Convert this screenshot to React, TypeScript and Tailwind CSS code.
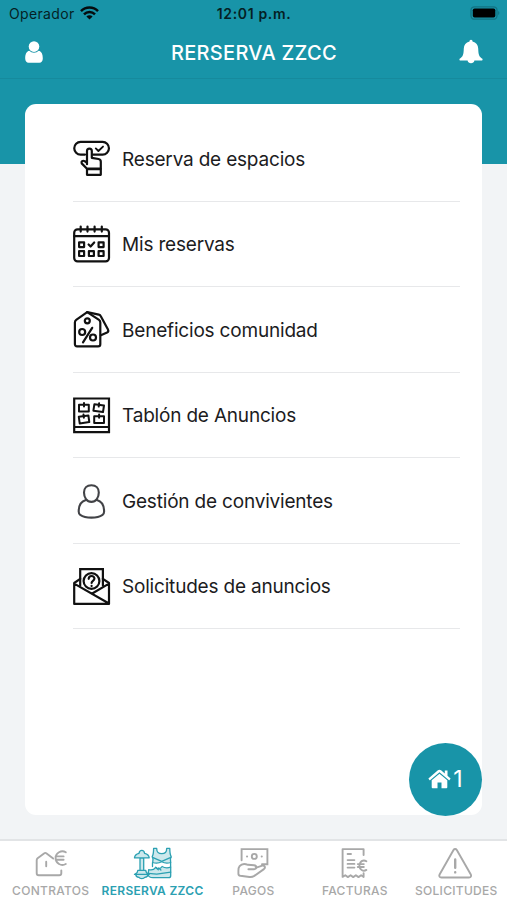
import type { ReactNode } from "react"
import clsx from "clsx"

const Icon = ({ children }: { children: ReactNode }) => (
  <svg viewBox="0 0 38 38" className="w-[38px] h-[38px] shrink-0" fill="none" stroke="#111" strokeWidth="2.2" strokeLinejoin="round" strokeLinecap="round">
    {children}
  </svg>
)

const TabIcon = ({ children }: { children: ReactNode }) => (
  <svg viewBox="0 0 40 34" className="w-10 h-[34px]" fill="none" stroke="currentColor" strokeWidth="1.9" strokeLinejoin="round" strokeLinecap="round">
    {children}
  </svg>
)

const menu = [
  {
    label: "Reserva de espacios",
    icon: (
      <Icon>
        <path d="M12 15.6H7.6a6.3 6.3 0 0 1 0-12.7h22a6.3 6.3 0 0 1 0 12.7H20" />
        <path d="m22.8 9.4 2.6 2.6 4.6-4.4" strokeWidth="1.9" />
        <path d="M14 25.2V12a2.4 2.4 0 0 1 4.8 0v6.8l6.7 1.2c1.6.3 2.3 1.2 2.3 2.7v7H14l-5.3-5.3c-.8-1.8 1.1-3.4 3-2.2L14 24" />
        <path d="M14 30.2h13.8v5.6H14z" />
      </Icon>
    ),
  },
  {
    label: "Mis reservas",
    icon: (
      <Icon>
        <rect x="1.2" y="4.4" width="34.8" height="32" rx="3.4" />
        <path d="M1.2 11.2H36M7.7 1.6v5M14.5 1.6v5M21.6 1.6v5M28.8 1.6v5" />
        <path d="M6.1 17.3h5v4.8h-5zM25.6 17.3h5v4.8h-5zM6.1 26.2h5V31h-5zM15.9 26.2h5V31h-5zM25.6 26.2h5V31h-5z" />
        <path d="m15.6 19.5 2 2 3.6-4" />
      </Icon>
    ),
  },
  {
    label: "Beneficios comunidad",
    icon: (
      <Icon>
        <path d="M14.2 2.1 26 9.9c1 .7 1.3 1.3 1.3 2.5v21.8a2.2 2.2 0 0 1-2.2 2.2h-21A2.2 2.2 0 0 1 1.9 34V12.4c0-1.2.3-1.8 1.3-2.5Z" />
        <path d="m14.2 2.1 11.6 2.5c1 .2 1.6.7 2 1.6l7.2 13.4c.6 1.3.3 2.2-.9 2.8l-6.3 2.8" />
        <circle cx="14.3" cy="10.8" r="2.5" />
        <circle cx="9.2" cy="22" r="3" />
        <circle cx="20" cy="27.5" r="3" />
        <path d="M19.2 17.8 10 32.4" />
      </Icon>
    ),
  },
  {
    label: "Tablón de Anuncios",
    icon: (
      <Icon>
        <path d="M1.2 2.5H36v33.6H1.2zM1.2 31H36" strokeLinejoin="miter" />
        <g strokeWidth="2">
          <path d="M6 8.7h9.8v6.7H6zM21.4 8.2l9.6 1.3-1 6.6-9.6-1.4zM5.8 20.8l9.6-1.3.9 6.6-9.6 1.3zM21.2 20.3H31v6.7h-9.8z" />
          <path d="M11 7v3.4M26.1 7.3l-.4 3.3M10.5 18.4l.4 3.3M26.1 18.4v3.4" />
        </g>
      </Icon>
    ),
  },
  {
    label: "Gestión de convivientes",
    icon: (
      <Icon>
        <g stroke="#424347" strokeWidth="2.1">
          <path d="M18.4 4.2c4.6 0 7.4 3 7.4 7.4 0 4.8-2.8 9.3-7.4 9.3S11 16.4 11 11.6c0-4.4 2.8-7.4 7.4-7.4Z" />
          <path d="M12.9 19.1C8.3 20.4 5.7 24.5 5.7 30.6c0 1.5.4 2.5 1.5 3.2 2.6 1.8 6.6 2.8 11.2 2.8s8.6-1 11.2-2.8c1.1-.7 1.5-1.7 1.5-3.2 0-6.1-2.6-10.2-7.2-11.5" />
        </g>
      </Icon>
    ),
  },
  {
    label: "Solicitudes de anuncios",
    icon: (
      <Icon>
        <path d="M7.2 18.5V2.1h22.7v16.4" strokeLinejoin="miter" />
        <path d="M7.2 11.8 1.2 16v20.9H36V16l-6.1-4.2M1.2 16.6 36 36.5M36 16.6 18.8 26.7" />
        <circle cx="18.5" cy="14" r="7.9" />
        <path d="M15.7 11.8c.1-3.8 5.9-3.6 5.7-.1-.2 2.3-2.8 2.1-2.8 4.3M18.6 18.8v.3" />
      </Icon>
    ),
  },
]

const tabs = [
  {
    label: "CONTRATOS",
    icon: (
      <TabIcon>
        <path d="M30.3 23.4v2.8a2 2 0 0 1-2 2H7.7a2 2 0 0 1-2-2V13.3c0-.9.2-1.4.9-2L13 6.4c.9-.7 1.7-.7 2.6 0l6.6 5.2M15.2 14.8v4.4" />
        <path d="M34.8 5.2a6.8 6.8 0 1 0 0 11.8M24.6 9.4h8M24.6 12.7h8" />
      </TabIcon>
    ),
  },
  {
    label: "RERSERVA ZZCC",
    active: true,
    icon: (
      <TabIcon>
        <g strokeWidth="1.3" fill="#1894a8" fillOpacity=".22">
          <path d="M7 6.3c.5-4 5.1-4 5.6 0 2.7.6 4.4 2 4.6 4.6H2.5c.2-2.6 1.8-4 4.5-4.6ZM8 11h3.7v12.4H8zM5.8 23.4h8c0 2.6.9 2.8 3.4 4H2.5c2.4-1.2 3.3-1.4 3.3-4ZM3.8 27.4h12.1c0 2-1.2 2.8-3.2 2.9-.7 1.7-5 1.7-5.7 0-2-.1-3.2-1-3.2-2.9Z" />
          <path d="M21.6 1.4h3.1c0 3.4 1.6 5.3 5 5.3s5-1.9 5-5.3h3.1c0 3.9.2 6.2 1.4 8.2-1 1.3-.9 3.6-.5 5.9-3.3 1.1-5.8 1-9-.7-3.1 1.7-5.7 1.8-9 .7.5-2.3.5-4.6-.5-5.9 1.2-2 1.4-4.3 1.4-8.2Z" />
          <path d="m20.5 10.4 9.2 4 9.2-4" fill="none" />
          <path d="M16.7 22.6c3 .9 5.5-.1 7-2.3 2.1 2 4.7 1.8 6.4-.8 2.6 1.6 5.7 1.7 8.6.6v8.6c0 1.5-.7 2-2.1 2H21c-3 0-4.6-1.2-4.9-3.2Z" />
          <path d="m16.4 26.4 8.3.7 14-2M23.7 20.4l2.6 2.3M26.7 21l2.2 2" fill="none" />
          <path d="M20.5 15.7v3.9M38.6 15.7V20" fill="none" />
        </g>
      </TabIcon>
    ),
  },
  {
    label: "PAGOS",
    icon: (
      <TabIcon>
        <path d="M8.6 13.3V2.1h25.8v15.2H29" strokeLinejoin="miter" />
        <circle cx="21.3" cy="9.4" r="2.5" />
        <path d="M14 9.4h.1M28.7 9.4h.1" strokeWidth="2" />
        <path d="M15.4 22.2h5.4c3.4 0 3.3-3.6.2-4l-6-.4c-3.2-1.3-6.6-.9-8.4 1.3-1 1.2-1.2 2.6-1.2 4.6v3c0 1.3.6 1.9 1.9 2.1l9.2 1.2c1.8.2 3.3-.1 4.8-1.1l9.6-6.8c2-1.6.7-4.2-1.7-3.4l-6.5 2.1" />
      </TabIcon>
    ),
  },
  {
    label: "FACTURAS",
    icon: (
      <TabIcon>
        <path d="M28.6 8V2.1h-21v27.8l2.7-1.6 2.6 1.8 2.7-1.8 2.6 1.8 2.7-1.8 2.6 1.8 2.6-1.8 2.5 1.6v-3.6" />
        <path d="M12.6 7h3.4M12.6 13.1h6.8M12.6 16.9h6.8M12.6 20.6h6.8" />
        <path d="M31.4 14.2c-3.3-2.1-7 .5-7 4.4s3.7 6.4 7 4.3M22.8 17.1h6M22.8 20h6" />
      </TabIcon>
    ),
  },
  {
    label: "SOLICITUDES",
    icon: (
      <TabIcon>
        <path d="M17.5 3c.8-1.3 2.5-1.3 3.3 0l14 24.5c.8 1.6.1 3-1.8 3H5.4c-1.9 0-2.6-1.4-1.8-3Z" />
        <path d="M19.2 12.4v8.3M19.2 25.2v.2" strokeWidth="2.4" />
      </TabIcon>
    ),
  },
]

const App = () => {
  return (
    <div className="w-[507px] h-[900px] overflow-hidden flex flex-col bg-[#f2f4f6] font-['Inter','Liberation_Sans',sans-serif]">
      <div className="h-[164px] shrink-0 bg-[#1894a8]">
        <div className="h-[27px] px-[9px] grid grid-cols-3 items-center text-sm text-[#051f24]">
          <div className="flex items-center gap-[5px]">
            <span className="tracking-[0.35px]">Operador</span>
            <svg viewBox="0 0 19 14" className="w-[19px] h-[14px] -mt-[2px]" fill="none" stroke="#050c0e" strokeWidth="2.5">
              <path d="M1 5.1a12.1 12.1 0 0 1 17 0M4 8.3a7.8 7.8 0 0 1 11 0" />
              <path d="M9.5 13.6 6.4 10.5a4.4 4.4 0 0 1 6.2 0Z" fill="#050c0e" stroke="none" />
            </svg>
          </div>
          <span className="text-center font-semibold whitespace-nowrap tracking-[0.65px] pl-px">12:01 p.m.</span>
          <svg viewBox="0 0 30 14" className="w-[30px] h-[14px] justify-self-end -mr-[2px] -mt-px">
            <rect x="1" y=".8" width="26" height="12.4" rx="3.5" fill="none" stroke="#127383" strokeWidth="1.3" />
            <rect x="2.8" y="2.5" width="22.5" height="9" rx="1.8" fill="#000" />
            <path d="M28.2 5v4c1.6-.5 1.6-3.5 0-4Z" fill="#127383" />
          </svg>
        </div>
        <div className="h-[52px] px-[25px] flex items-center justify-between border-b border-[#168a9d] text-white">
          <svg viewBox="0 0 18 22" className="w-[18px] h-[22px] -mt-px" fill="currentColor">
            <circle cx="9" cy="5.6" r="5.3" />
            <path d="M4.3 9.8C1.3 10.5.2 13.4.2 17.5c0 2.6 1.3 4.2 3.4 4.2h10.8c2.1 0 3.4-1.6 3.4-4.2 0-4.1-1.1-7-4.1-7.7a6.4 6.4 0 0 1-9.4 0Z" />
          </svg>
          <h1 className="text-xl font-medium tracking-[0.3px] ml-[6px]">RERSERVA ZZCC</h1>
          <svg viewBox="0 0 24 26" className="w-6 h-[26px] -mt-px -mr-px" fill="currentColor">
            <path d="M12 .8c1 0 1.5.7 1.5 1.7 3.7.8 5.5 3.5 5.7 7 .2 6 .7 8.1 4.2 10.3.5.9 0 1.8-.9 1.8h-7.1c-.4 3.6-6.4 3.6-6.8 0H1.5c-.9 0-1.4-.9-.9-1.8 3.5-2.2 4-4.3 4.2-10.3.2-3.5 2-6.2 5.7-7 0-1 .5-1.7 1.5-1.7Z" />
          </svg>
        </div>
      </div>

      <div className="relative -mt-[60px] mx-[25px] w-[457px] h-[711px] shrink-0 rounded-[11px] bg-white pt-[12px] pl-12 pr-[22px]">
        {menu.map((item) => (
          <div key={item.label} className="h-[85.5px] flex items-center gap-[11px] border-b border-[#e7e8ea]">
            {item.icon}
            <span className="pt-[3px] text-[19px] tracking-[-0.19px] text-[#1c1c1e] whitespace-nowrap">{item.label}</span>
          </div>
        ))}
        <button className="absolute right-0 -bottom-[0.5px] size-[73px] rounded-full bg-[#1894a8] text-white flex items-center justify-center gap-[2px]">
          <svg viewBox="0 0 23 20" className="w-[23px] h-5" fill="currentColor">
            <path d="M11.5 4.8 3.7 11.3v7a.9.9 0 0 0 .9.9h4.9v-5.7h4v5.7h4.9a.9.9 0 0 0 .9-.9v-7Z" />
            <path d="m22.3 9.2-2.8-2.4V1.5h-2.7V4.4l-3.7-3.1a2.5 2.5 0 0 0-3.2 0L.7 9.2c-.3.3-.3.6 0 .9l.7.8c.3.3.6.3.9 0l9.2-7.7 9.2 7.7c.3.3.6.3.9 0l.7-.8c.3-.3.3-.6 0-.9Z" />
          </svg>
          <span className="text-[23px]">1</span>
        </button>
      </div>

      <div className="mt-[24px] h-[61px] shrink-0 border-t-2 border-[#e2e4e6] bg-white grid grid-cols-5 pt-[6px]">
        {tabs.map((tab) => (
          <div key={tab.label} className={clsx("flex flex-col items-center", tab.active ? "text-[#2ba0b2]" : "text-[#a8a8a8]")}>
            {tab.icon}
            <span className={clsx("mt-[2px] text-xs leading-4 whitespace-nowrap tracking-[0.3px]", tab.active ? "pl-px font-semibold" : "font-medium")}>
              {tab.label}
            </span>
          </div>
        ))}
      </div>
    </div>
  )
}

export default App
